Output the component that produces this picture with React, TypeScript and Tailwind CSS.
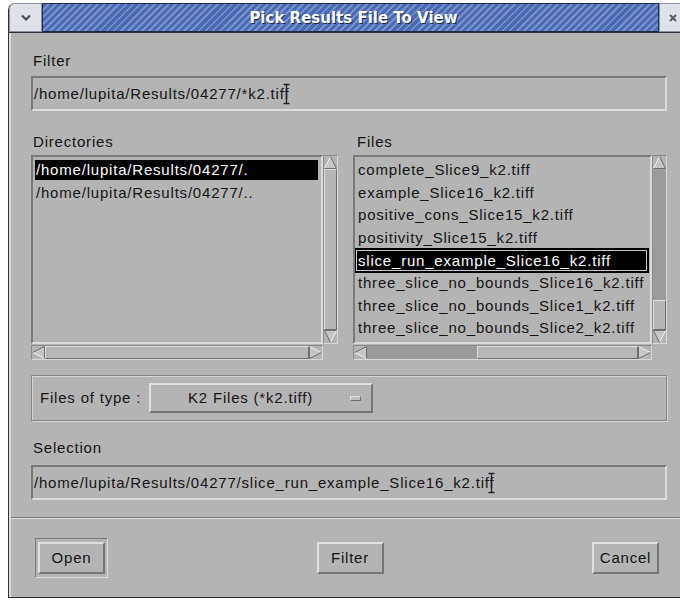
import React from "react";

// Motif-style 3D edges
const sunken = "border-2 border-t-[#7a7a7a] border-l-[#7a7a7a] border-b-[#dcdcdc] border-r-[#dcdcdc]";
const raised = "border-2 border-t-[#e0e0e0] border-l-[#e0e0e0] border-b-[#767676] border-r-[#767676]";
const raisedThin = "border border-t-[#e0e0e0] border-l-[#e0e0e0] border-b-[#6e6e6e] border-r-[#6e6e6e]";

const files = [
  "complete_Slice9_k2.tiff",
  "example_Slice16_k2.tiff",
  "positive_cons_Slice15_k2.tiff",
  "positivity_Slice15_k2.tiff",
  "slice_run_example_Slice16_k2.tiff",
  "three_slice_no_bounds_Slice16_k2.tiff",
  "three_slice_no_bounds_Slice1_k2.tiff",
  "three_slice_no_bounds_Slice2_k2.tiff",
];

const dirs = ["/home/lupita/Results/04277/.", "/home/lupita/Results/04277/.."];

type Dir = "up" | "down" | "left" | "right";

function Arrow({ dir }: { dir: Dir }) {
  const rot =
    dir === "down" ? "rotate-180" : dir === "left" ? "-rotate-90" : dir === "right" ? "rotate-90" : "";
  return (
    <div className="w-[13px] h-[13px] flex items-center justify-center shrink-0">
      <svg width="13" height="13" viewBox="0 0 13 13" className={rot}>
        <polygon points="6.5,0.5 12.5,12.5 0.5,12.5" fill="#c6c6c6" />
        <line x1="6.5" y1="0.5" x2="0.5" y2="12.5" stroke="#eeeeee" strokeWidth="1" />
        <line x1="0.5" y1="12.5" x2="12.5" y2="12.5" stroke="#6f6f6f" strokeWidth="1" />
        <line x1="6.5" y1="0.5" x2="12.5" y2="12.5" stroke="#6f6f6f" strokeWidth="1" />
      </svg>
    </div>
  );
}

function VScroll({ trough }: { trough?: boolean }) {
  return (
    <div className="w-[15px] flex flex-col border border-t-[#8a8a8a] border-l-[#8a8a8a] border-b-[#d8d8d8] border-r-[#d8d8d8] bg-[#b4b4b4]">
      <Arrow dir="up" />
      {trough ? (
        <>
          <div className="flex-1 bg-[#9b9b9b]" />
          <div className={`h-[30px] ${raisedThin} bg-[#b6b6b6]`} />
        </>
      ) : (
        <div className={`flex-1 ${raisedThin} bg-[#b6b6b6]`} />
      )}
      <Arrow dir="down" />
    </div>
  );
}

function HScroll({ trough }: { trough?: boolean }) {
  return (
    <div className="flex-1 h-[15px] flex border border-t-[#8a8a8a] border-l-[#8a8a8a] border-b-[#d8d8d8] border-r-[#d8d8d8] bg-[#b4b4b4]">
      <Arrow dir="left" />
      {trough && <div className="w-[110px] bg-[#9b9b9b]" />}
      <div className={`flex-1 ${raisedThin} bg-[#b6b6b6]`} />
      <Arrow dir="right" />
    </div>
  );
}

function IBeam() {
  return (
    <svg width="7" height="22" viewBox="0 0 7 22" className="shrink-0 -ml-[6px]">
      <path d="M0.5 1.5h6M3.5 1.5v19M0.5 20.5h6" stroke="#222" strokeWidth="1.3" fill="none" />
    </svg>
  );
}

function TextField({ value }: { value: string }) {
  return (
    <div className={`h-[35px] ${sunken} bg-[#b4b4b4] flex items-center pl-[1px]`}>
      <span className="whitespace-nowrap">{value}</span>
      <IBeam />
    </div>
  );
}

function TitleBar() {
  return (
    <div className="h-[30px] flex shrink-0 border-b border-[#2a2f3a]">
      <div className="w-[33px] bg-[#dfe2e9] border border-[#8d93a2] rounded-tl-[6px] flex items-center justify-center">
        <svg width="12" height="8" viewBox="0 0 12 8">
          <path d="M2 1.5l4 4 4-4" stroke="#4a4d55" strokeWidth="2.2" fill="none" />
        </svg>
      </div>
      <div className="flex-1 flex items-center justify-center border border-[#1f2c4d] bg-[repeating-linear-gradient(135deg,#4a6ab4_0px,#4a6ab4_3px,#7891cc_3px,#7891cc_5px)]">
        <span className="ml-[6px] font-['DejaVu_Sans',sans-serif] font-bold text-[15px] tracking-normal text-white [text-shadow:1px_1px_0_#1f2a45]">
          Pick Results File To View
        </span>
      </div>
      <div className="w-[30px] bg-[#dfe2e9] border border-[#8d93a2] flex items-center pl-[8px]">
        <svg width="10" height="10" viewBox="0 0 10 10">
          <path d="M2 2l6 6M8 2l-6 6" stroke="#5a5d66" strokeWidth="2" />
        </svg>
      </div>
    </div>
  );
}

function Button({ label }: { label: string }) {
  return (
    <div className={`w-[67px] h-[32px] ${raised} bg-[#b4b4b4] flex items-center justify-center`}>
      {label}
    </div>
  );
}

export default function App() {
  return (
    <div className="w-[680px] h-[600px] bg-white overflow-hidden font-['Liberation_Sans',Arial,sans-serif] text-[15px] tracking-[0.8px] leading-[18px] text-[#151515]">
      <div className="ml-[8px] mt-[3px] w-[681px] h-[595px] flex flex-col bg-[#b4b4b4] border-l border-b border-[#333] rounded-tl-[7px] overflow-hidden">
        <TitleBar />
        <div className="flex-1 flex flex-col border-l-2 border-[#dadada]">
          <div className="pl-[20px] pr-[22px] pt-[19px] flex flex-col">
            <div className="pl-[2px] mb-[6px]">Filter</div>
            <TextField value="/home/lupita/Results/04277/*k2.tiff" />

            <div className="grid grid-cols-[307px_1fr] gap-x-[15px] mt-[22px]">
              <div className="pl-[2px] mb-[4px]">Directories</div>
              <div className="pl-[4px] mb-[4px]">Files</div>

              {/* directory list */}
              <div className="h-[205px] flex flex-col">
                <div className="flex flex-1 min-h-0">
                  <div className={`flex-1 ${sunken} pt-[2px]`}>
                    {dirs.map((d, i) => (
                      <div key={d} className="h-[22.6px] flex items-center">
                        <div
                          className={`h-[20px] flex items-center ml-[2px] mr-[3px] flex-1 pl-[1px] whitespace-nowrap ${
                            i === 0 ? "bg-black text-white" : ""
                          }`}
                        >
                          {d}
                        </div>
                      </div>
                    ))}
                  </div>
                  <VScroll />
                </div>
                <div className="flex mt-[1px]">
                  <HScroll />
                  <div className="w-[15px]" />
                </div>
              </div>

              {/* file list */}
              <div className="h-[205px] flex flex-col">
                <div className="flex flex-1 min-h-0">
                  <div className={`flex-1 ${sunken} pt-[2px] overflow-hidden`}>
                    {files.map((f, i) =>
                      i === 4 ? (
                        <div key={f} className="h-[22.6px] flex items-center">
                          <div className="h-[25px] flex-1 mr-[1px] -ml-[1px] bg-black border-2 border-black shadow-[inset_0_0_0_1px_#c8c8c8] flex items-center pl-[2px] text-white whitespace-nowrap">
                            {f}
                          </div>
                        </div>
                      ) : (
                        <div key={f} className="h-[22.6px] flex items-center pl-[3px] whitespace-nowrap">
                          {f}
                        </div>
                      )
                    )}
                  </div>
                  <VScroll trough />
                </div>
                <div className="flex mt-[1px]">
                  <HScroll trough />
                  <div className="w-[15px]" />
                </div>
              </div>
            </div>

            {/* file type chooser */}
            <div className="mt-[15px] h-[46px] flex items-center pl-[8px] border border-[#858585] shadow-[inset_1px_1px_0_#d6d6d6,1px_1px_0_#d6d6d6]">
              <span className="w-[109px] whitespace-nowrap">Files of type :</span>
              <div className={`w-[224px] h-[30px] ${raised} flex items-center`}>
                <span className="flex-1 text-center whitespace-nowrap">K2 Files (*k2.tiff)</span>
                <div className={`w-[11px] h-[5px] mr-[10px] ${raisedThin} bg-[#c0c0c0]`} />
              </div>
            </div>

            <div className="pl-[2px] mt-[18px] mb-[8px]">Selection</div>
            <TextField value="/home/lupita/Results/04277/slice_run_example_Slice16_k2.tiff" />
          </div>

          <div className="mt-[17px] h-[2px] border-t border-[#7a7a7a] border-b border-b-[#dcdcdc]" />

          <div className="flex justify-between items-center pl-[24px] pr-[30px] pt-[19px]">
            <div className="w-[73px] h-[40px] border border-t-[#7a7a7a] border-l-[#7a7a7a] border-b-[#dcdcdc] border-r-[#dcdcdc] flex items-center justify-center">
              <Button label="Open" />
            </div>
            <Button label="Filter" />
            <Button label="Cancel" />
          </div>
        </div>
      </div>
    </div>
  );
}
